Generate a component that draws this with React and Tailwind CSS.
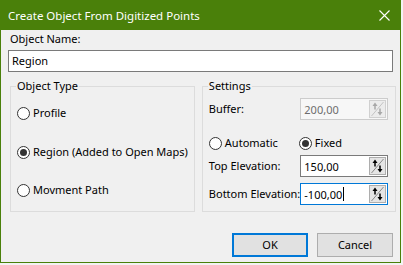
import { useState } from "react";

const font = { fontFamily: '"Noto Sans", "Open Sans", sans-serif' };

function Spinner({ disabled }) {
  const arrow = disabled ? "#a8a8a8" : "#000";
  return (
    <div className={`shrink-0 w-[17px] h-[18px] border ${disabled ? "border-[#d0d0d0] bg-[#ececec]" : "border-[#adadad] bg-[#e5e5e5]"}`}>
      <svg width="15" height="16" viewBox="0 0 15 16">
        <line x1="1.5" y1="15" x2="13.5" y2="1" stroke={disabled ? "#c4c4c4" : "#8a8a8a"} strokeWidth="1" />
        <polygon points="5,1.5 2.5,5 7.5,5" fill={arrow} />
        <rect x="4.25" y="5" width="1.5" height="3.5" fill={arrow} />
        <polygon points="10,14.5 7.5,11 12.5,11" fill={arrow} />
        <rect x="9.25" y="7.5" width="1.5" height="3.5" fill={arrow} />
      </svg>
    </div>
  );
}

function NumberBox({ value, disabled, focused }) {
  return (
    <div
      className={`shrink-0 w-[88px] h-[22px] flex items-center justify-between pl-[3px] pr-[1px] border ${
        disabled
          ? "border-[#cccccc] bg-[#f7f7f7] text-[#6d6d6d]"
          : focused
          ? "border-[#0078d7] bg-white text-black"
          : "border-[#7a7a7a] bg-white text-black"
      }`}
    >
      <span className="flex items-center leading-none">
        {value}
        {focused && <span className="inline-block w-px h-[14px] bg-black ml-px"></span>}
      </span>
      <Spinner disabled={disabled} />
    </div>
  );
}

function Radio({ checked, label, onClick }) {
  return (
    <div className="flex items-center h-[20px] whitespace-nowrap cursor-default" onClick={onClick}>
      <span className="shrink-0 w-[13px] h-[13px] rounded-full border border-[#333333] bg-white flex items-center justify-center">
        {checked && <span className="w-[7px] h-[7px] rounded-full bg-[#333333]"></span>}
      </span>
      <span className="ml-[3px]">{label}</span>
    </div>
  );
}

export default function App() {
  const [type, setType] = useState("region");
  const [mode, setMode] = useState("fixed");

  return (
    <div className="w-[403px] h-[265px] bg-[#f3f3f3] text-[11px] text-black" style={font}>
      <div className="w-[401px] h-[263px] bg-[#f0f0f0] border border-[#4a800a] flex flex-col">
        {/* Title bar */}
        <div className="h-[29px] bg-[#4a800a] flex items-center justify-between pl-[7px] pr-[10px] text-white">
          <span className="text-[11.5px] leading-none">Create Object From Digitized Points</span>
          <svg width="11" height="11" viewBox="0 0 11 11">
            <path d="M0.5 0.5 L10.5 10.5 M10.5 0.5 L0.5 10.5" stroke="#fff" strokeWidth="1.1" />
          </svg>
        </div>

        <div className="px-[7px] flex flex-col">
          <div className="mt-[1px] h-[16px] leading-[16px] pl-[2px]">Object Name:</div>
          <div className="mt-[3px] h-[22px] border border-[#7a7a7a] bg-white flex items-center pl-[3px]">Region</div>

          <div className="mt-[6px] flex gap-[7px] ml-[2px]">
            <fieldset className="w-[184px] h-[134px] border border-[#dcdcdc] px-[6px]">
              <legend className="-ml-px px-px h-[16px] leading-[16px]">Object Type</legend>
              <div className="pt-[9px] flex flex-col">
                <Radio checked={type === "profile"} label="Profile" onClick={() => setType("profile")} />
                <div className="mt-[19px]">
                  <Radio checked={type === "region"} label="Region (Added to Open Maps)" onClick={() => setType("region")} />
                </div>
                <div className="mt-[18px]">
                  <Radio checked={type === "path"} label="Movment Path" onClick={() => setType("path")} />
                </div>
              </div>
            </fieldset>

            <fieldset className="w-[194px] h-[134px] border border-[#dcdcdc] pl-[6px] pr-[7px]">
              <legend className="-ml-px px-px h-[16px] leading-[16px]">Settings</legend>
              <div className="pt-[4px] flex flex-col">
                <div className="flex items-center justify-between">
                  <span>Buffer:</span>
                  <NumberBox value="200,00" disabled />
                </div>
                <div className="mt-[13px] grid grid-cols-[90px_1fr]">
                  <Radio checked={mode === "auto"} label="Automatic" onClick={() => setMode("auto")} />
                  <Radio checked={mode === "fixed"} label="Fixed" onClick={() => setMode("fixed")} />
                </div>
                <div className="mt-[2px] flex items-center justify-between">
                  <span className="whitespace-nowrap">Top Elevation:</span>
                  <NumberBox value="150,00" />
                </div>
                <div className="mt-[6px] flex items-center justify-between">
                  <span className="whitespace-nowrap">Bottom Elevation:</span>
                  <NumberBox value="-100,00" focused />
                </div>
              </div>
            </fieldset>
          </div>

          <div className="mt-[21px] flex justify-end gap-[9px]">
            <button className="w-[76px] h-[24px] bg-[#e1e1e1] border-2 border-[#0078d7] flex items-center justify-center">OK</button>
            <button className="w-[76px] h-[24px] bg-[#e1e1e1] border border-[#adadad] flex items-center justify-center">Cancel</button>
          </div>
        </div>
      </div>
    </div>
  );
}
